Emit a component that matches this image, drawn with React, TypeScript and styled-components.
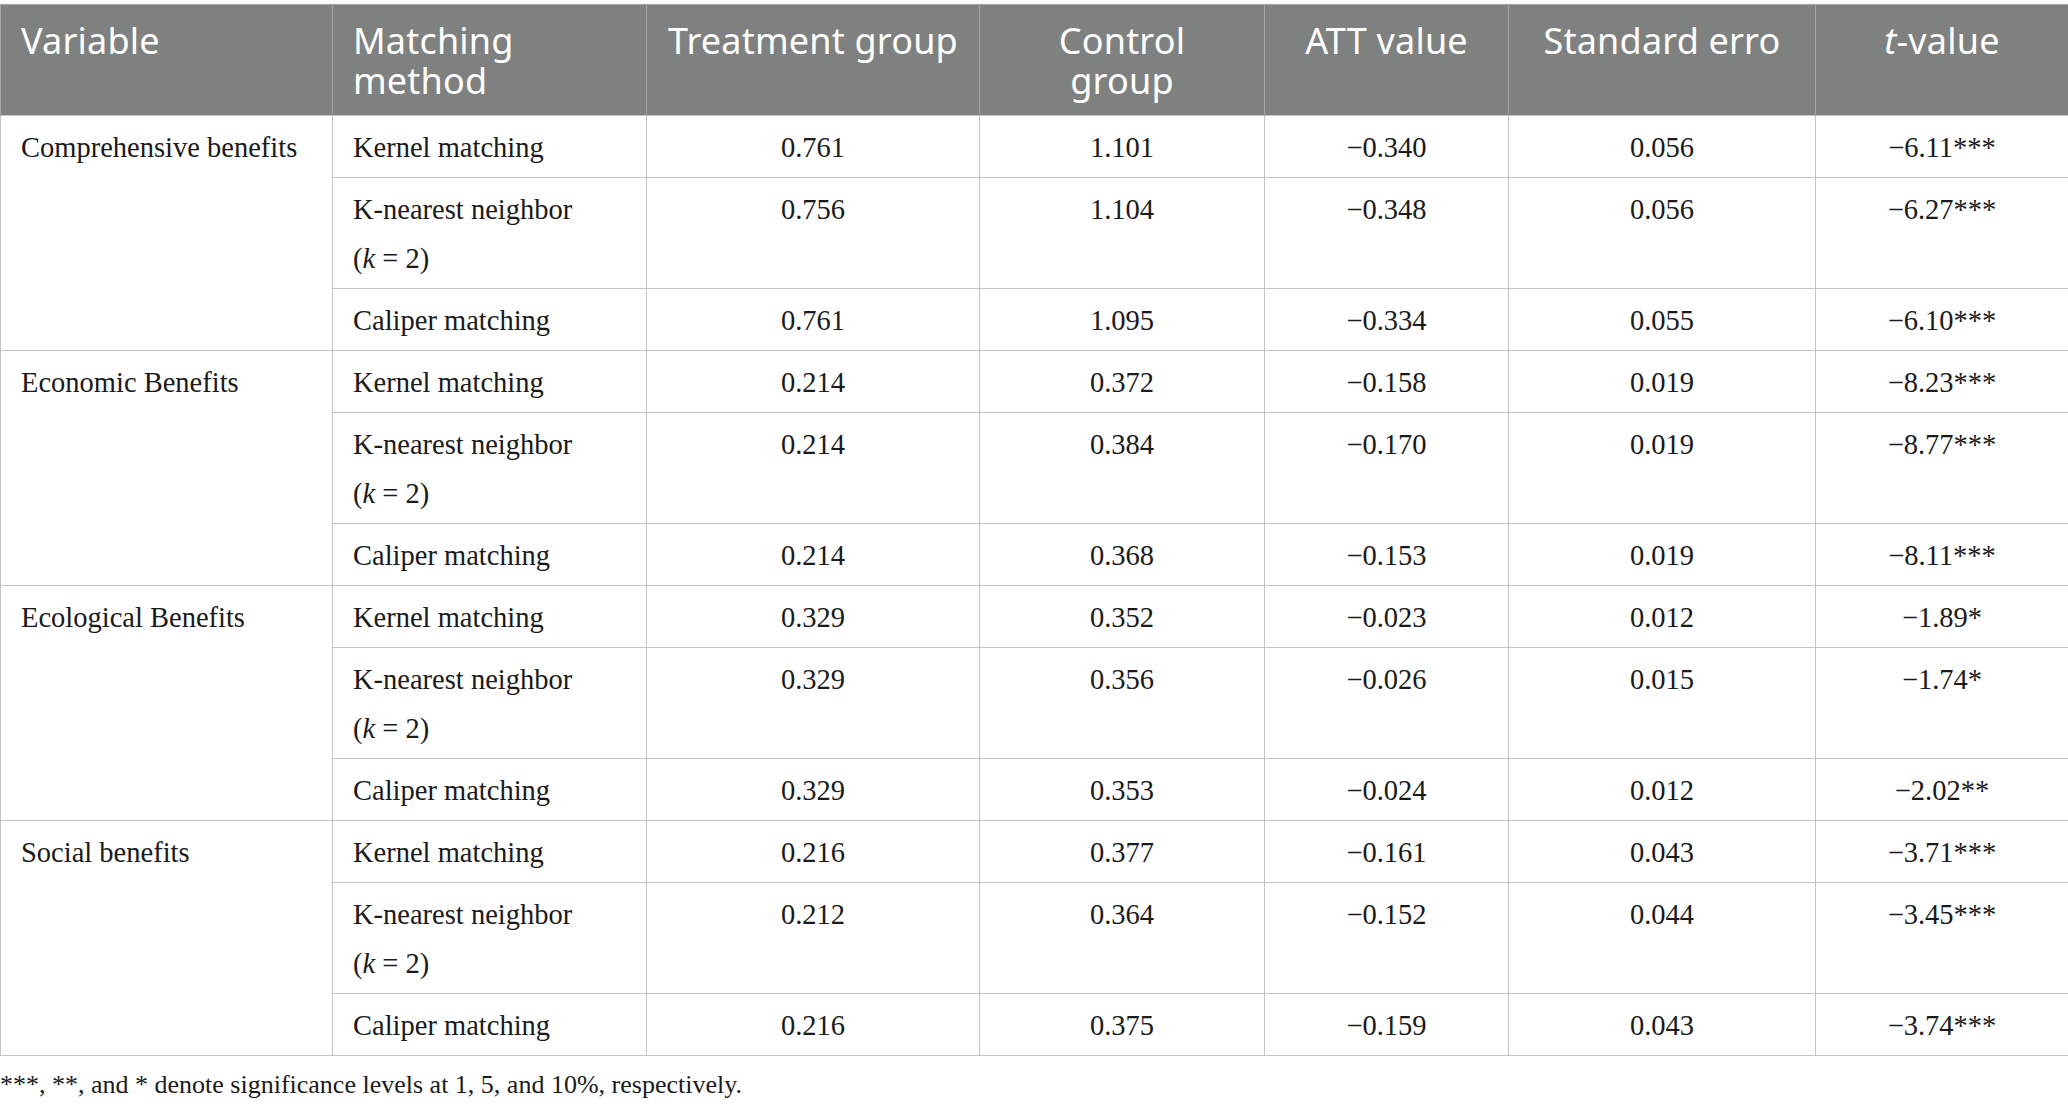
import React from 'react';
import styled, { createGlobalStyle } from 'styled-components';

const GlobalStyle = createGlobalStyle`
  html, body {
    margin: 0;
    padding: 0;
    background: #ffffff;
  }
`;

const Page = styled.div`
  width: 2068px;
  padding-top: 4px;
  background: #ffffff;
`;

const Table = styled.table`
  width: 2068px;
  border-collapse: collapse;
  table-layout: fixed;
`;

const HeadCell = styled.th<{ $align?: 'left' | 'center' }>`
  background: #7f8180;
  color: #ffffff;
  font-family: 'Noto Sans', 'Open Sans', sans-serif;
  font-weight: 400;
  font-size: 36px;
  line-height: 40px;
  letter-spacing: 0.2px;
  padding: 16px 20px 14px;
  text-align: ${(p) => p.$align || 'center'};
  vertical-align: top;
  border: 1px solid #a4a6a5;
  border-bottom: none;

  i {
    font-style: italic;
  }
`;

const Cell = styled.td<{ $align?: 'left' | 'center' }>`
  font-family: 'Liberation Serif', 'Times New Roman', serif;
  font-size: 28.5px;
  line-height: 49px;
  color: #1a1a1a;
  padding: 7px 20px 5px;
  text-align: ${(p) => p.$align || 'center'};
  vertical-align: top;
  border: 1px solid #c4c4c4;

  i {
    font-style: italic;
  }
`;

const Footnote = styled.p`
  margin: 12px 0 0;
  font-family: 'Liberation Serif', 'Times New Roman', serif;
  font-size: 26px;
  line-height: 34px;
  color: #1a1a1a;
`;

const widths = [332, 314, 333, 285, 244, 307, 253];

type Row = [string, string, string, string, string];

interface Group {
  name: string;
  rows: Row[];
}

const groups: Group[] = [
  {
    name: 'Comprehensive benefits',
    rows: [
      ['0.761', '1.101', '−0.340', '0.056', '−6.11***'],
      ['0.756', '1.104', '−0.348', '0.056', '−6.27***'],
      ['0.761', '1.095', '−0.334', '0.055', '−6.10***'],
    ],
  },
  {
    name: 'Economic Benefits',
    rows: [
      ['0.214', '0.372', '−0.158', '0.019', '−8.23***'],
      ['0.214', '0.384', '−0.170', '0.019', '−8.77***'],
      ['0.214', '0.368', '−0.153', '0.019', '−8.11***'],
    ],
  },
  {
    name: 'Ecological Benefits',
    rows: [
      ['0.329', '0.352', '−0.023', '0.012', '−1.89*'],
      ['0.329', '0.356', '−0.026', '0.015', '−1.74*'],
      ['0.329', '0.353', '−0.024', '0.012', '−2.02**'],
    ],
  },
  {
    name: 'Social benefits',
    rows: [
      ['0.216', '0.377', '−0.161', '0.043', '−3.71***'],
      ['0.212', '0.364', '−0.152', '0.044', '−3.45***'],
      ['0.216', '0.375', '−0.159', '0.043', '−3.74***'],
    ],
  },
];

const methods: React.ReactNode[] = [
  'Kernel matching',
  <>
    K-nearest neighbor
    <br />(<i>k</i> = 2)
  </>,
  'Caliper matching',
];

const App = () => {
  return (
    <Page>
      <GlobalStyle />
      <Table>
        <colgroup>
          {widths.map((w, i) => (
            <col key={i} style={{ width: w }} />
          ))}
        </colgroup>
        <thead>
          <tr>
            <HeadCell $align="left">Variable</HeadCell>
            <HeadCell $align="left">
              Matching
              <br />
              method
            </HeadCell>
            <HeadCell>Treatment group</HeadCell>
            <HeadCell>
              Control
              <br />
              group
            </HeadCell>
            <HeadCell>ATT value</HeadCell>
            <HeadCell>Standard erro</HeadCell>
            <HeadCell>
              <i>t</i>-value
            </HeadCell>
          </tr>
        </thead>
        <tbody>
          {groups.map((g) =>
            g.rows.map((r, i) => (
              <tr key={g.name + i}>
                {i === 0 && (
                  <Cell $align="left" rowSpan={3}>
                    {g.name}
                  </Cell>
                )}
                <Cell $align="left">{methods[i]}</Cell>
                {r.map((v, j) => (
                  <Cell key={j}>{v}</Cell>
                ))}
              </tr>
            ))
          )}
        </tbody>
      </Table>
      <Footnote>***, **, and * denote significance levels at 1, 5, and 10%, respectively.</Footnote>
    </Page>
  );
};

export default App;
